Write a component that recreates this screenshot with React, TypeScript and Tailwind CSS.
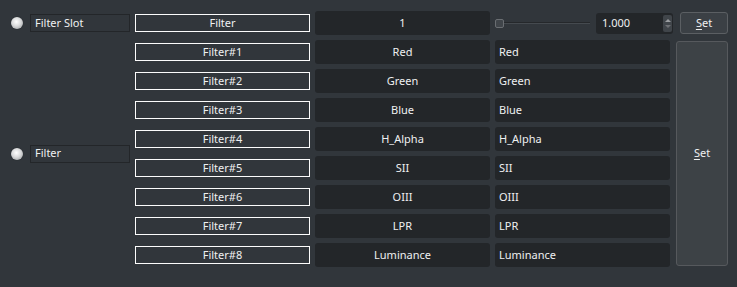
import React from 'react';

const filters = [
    { name: 'Filter#1', value: 'Red' },
    { name: 'Filter#2', value: 'Green' },
    { name: 'Filter#3', value: 'Blue' },
    { name: 'Filter#4', value: 'H_Alpha' },
    { name: 'Filter#5', value: 'SII' },
    { name: 'Filter#6', value: 'OIII' },
    { name: 'Filter#7', value: 'LPR' },
    { name: 'Filter#8', value: 'Luminance' },
];

function Led() {
    return (
        <div className="w-3 h-3 rounded-full bg-[radial-gradient(circle_at_45%_40%,#ffffff_0%,#d9dadb_45%,#8e9194_100%)] shadow-[0_0_1px_#1b1d20]" />
    );
}

function SetLabel() {
    return (
        <span>
            <span className="underline underline-offset-2">S</span>et
        </span>
    );
}

export default function App() {
    return (
        <div className="w-[737px] h-[287px] bg-[#31363b] text-[#eff0f1] text-[11px] font-['Noto_Sans',sans-serif] pt-[11px] pl-[11px]">
            <div className="grid grid-cols-[14px_100px_175px_175px_175px_54px] grid-rows-[repeat(9,24px)] gap-x-[5px] gap-y-[5px]">
                {/* Filter Slot row */}
                <div className="flex items-center">
                    <Led />
                </div>
                <div className="self-center h-[18px] border border-[#232629] pl-[4px] flex items-center">Filter Slot</div>
                <div className="self-center h-[18px] border border-[#fcfcfc] flex items-center justify-center">Filter</div>
                <div className="bg-[#232629] rounded-[3px] flex items-center justify-center">1</div>
                <div className="col-span-2 flex items-center gap-[6px]">
                    <div className="relative w-[95px] h-full flex items-center">
                        <div className="absolute left-[4px] right-0 h-[2px] bg-[#25282b] border-b border-[#454a4f]" />
                        <div className="relative w-[9px] h-[9px] rounded-[2px] bg-[#40454a] border border-[#6a6e72]" />
                    </div>
                    <div className="w-[77px] h-[21px] bg-[#232629] rounded-[3px] flex items-center justify-between pl-[6px] pr-px">
                        <span>1.000</span>
                        <div className="w-[9px] h-[17px] bg-[#40454a] rounded-[2px] flex flex-col items-center justify-center gap-[3px]">
                            <div className="w-0 h-0 border-l-[3px] border-r-[3px] border-b-[3px] border-l-transparent border-r-transparent border-b-[#9a9da0]" />
                            <div className="w-0 h-0 border-l-[3px] border-r-[3px] border-t-[3px] border-l-transparent border-r-transparent border-t-[#6e7175]" />
                        </div>
                    </div>
                    <button className="ml-px w-[48px] h-[22px] rounded-[3px] bg-[#3b4045] border border-[#5b5f63] flex items-center justify-center">
                        <SetLabel />
                    </button>
                </div>

                {/* Filter group */}
                <div className="row-start-2 row-span-8 col-start-1 flex items-center">
                    <Led />
                </div>
                <div className="row-start-2 row-span-8 col-start-2 self-center h-[18px] border border-[#232629] pl-[4px] flex items-center">Filter</div>
                {filters.map((f, i) => (
                    <React.Fragment key={f.name}>
                        <div
                            className="col-start-3 self-center h-[18px] border border-[#fcfcfc] flex items-center justify-center"
                            style={{ gridRowStart: i + 2 }}
                        >
                            {f.name}
                        </div>
                        <div
                            className="col-start-4 bg-[#232629] rounded-[3px] flex items-center justify-center"
                            style={{ gridRowStart: i + 2 }}
                        >
                            {f.value}
                        </div>
                        <div
                            className="col-start-5 bg-[#232629] rounded-[3px] flex items-center pl-[4px]"
                            style={{ gridRowStart: i + 2 }}
                        >
                            {f.value}
                        </div>
                    </React.Fragment>
                ))}
                <button className="row-start-2 row-span-8 col-start-6 ml-px mr-px my-px rounded-[3px] bg-[#3d4246] border border-[#56595d] flex items-center justify-center">
                    <SetLabel />
                </button>
            </div>
        </div>
    );
}
